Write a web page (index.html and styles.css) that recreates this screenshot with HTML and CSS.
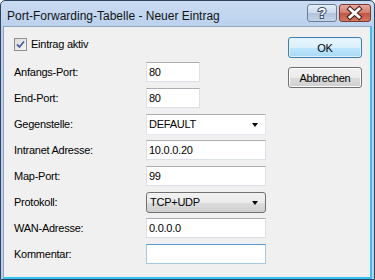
FILE: index.html
```html
<!DOCTYPE html>
<html lang="de">
<head>
    <meta charset="UTF-8">
    <title>Port-Forwarding-Tabelle - Neuer Eintrag</title>
    <link rel="stylesheet" href="styles.css">
</head>
<body>
<div class="fenster">
    <div class="titelleiste">
        <div class="titel">Port-Forwarding-Tabelle - Neuer Eintrag</div>
        <div class="titel_knoepfe">
            <div class="knopf_hilfe">
                <svg width="30" height="18" viewBox="0 0 30 18">
                    <text x="15" y="14" text-anchor="middle" class="fragezeichen">?</text>
                </svg>
            </div>
            <div class="knopf_schliessen">
                <svg width="31" height="18" viewBox="0 0 31 18">
                    <path d="M11 5 L20 13 M20 5 L11 13" stroke="#3b1f1a" stroke-width="5" stroke-linecap="square"/>
                    <path d="M11 5 L20 13 M20 5 L11 13" stroke="#ffffff" stroke-width="3" stroke-linecap="square"/>
                </svg>
            </div>
        </div>
    </div>

    <div class="inhalt">
        <div class="formular">
            <div class="zeile_check">
                <span class="checkbox">
                    <svg width="9" height="9" viewBox="0 0 9 9">
                        <path d="M1 4.5 L3.5 7 L8 1.5" fill="none" stroke="#4b5ea6" stroke-width="1.8"/>
                    </svg>
                </span>
                <span>Eintrag aktiv</span>
            </div>
            <div class="zeile">
                <label>Anfangs-Port:</label>
                <div class="feld klein">80</div>
            </div>
            <div class="zeile">
                <label>End-Port:</label>
                <div class="feld klein">80</div>
            </div>
            <div class="zeile">
                <label>Gegenstelle:</label>
                <div class="feld auswahl">DEFAULT<span class="pfeil"></span></div>
            </div>
            <div class="zeile">
                <label>Intranet Adresse:</label>
                <div class="feld">10.0.0.20</div>
            </div>
            <div class="zeile">
                <label>Map-Port:</label>
                <div class="feld">99</div>
            </div>
            <div class="zeile">
                <label>Protokoll:</label>
                <div class="feld liste">TCP+UDP<span class="pfeil"></span></div>
            </div>
            <div class="zeile">
                <label>WAN-Adresse:</label>
                <div class="feld">0.0.0.0</div>
            </div>
            <div class="zeile">
                <label>Kommentar:</label>
                <div class="feld aktiv"></div>
            </div>
        </div>

        <div class="knoepfe">
            <button class="button_ok">OK</button>
            <button class="button_abbrechen">Abbrechen</button>
        </div>
    </div>
</div>
</body>
</html>
```

FILE: styles.css
```css
/*seite*/
body{
    margin: 0;
    background-color: #ffffff;
    font-family: "Liberation Sans", Arial, sans-serif;
}

.fenster{
    width: 375px;
    height: 280px;
    box-sizing: border-box;
    border: 1px solid #2d4460;
    border-radius: 5px 5px 0 0;
    background: linear-gradient(#c9dbf1, #b9d0ec 30px, #b9d0ec);
    display: flex;
    flex-direction: column;
    overflow: hidden;
}

/*titelleiste*/
.titelleiste{
    height: 25px;
    display: flex;
    justify-content: space-between;
    align-items: flex-start;
}

.titel{
    font-size: 12px;
    color: #141414;
    padding-left: 6px;
    padding-top: 8px;
}

.titel_knoepfe{
    display: flex;
    gap: 2px;
    margin-top: 3px;
    margin-right: 3px;
}

.knopf_hilfe, .knopf_schliessen{
    height: 18px;
    box-sizing: border-box;
    border: 1px solid #6d7f96;
    border-radius: 3px;
}

.knopf_hilfe{
    width: 30px;
    background: linear-gradient(#e5eef8, #cbd9ea 50%, #b1c4dc 51%, #c3d4e8);
}

.knopf_schliessen{
    width: 32px;
    border-color: #7a3a32;
    background: linear-gradient(#e8a99f, #d47b6c 50%, #c35440 51%, #d2775f);
}

.knopf_hilfe svg, .knopf_schliessen svg{
    display: block;
    margin: -1px;
}

.fragezeichen{
    font-family: "Liberation Sans", Arial, sans-serif;
    font-size: 14px;
    font-weight: bold;
    fill: #ffffff;
    stroke: #3b4b60;
    stroke-width: 2px;
    paint-order: stroke;
}

/*inhalt*/
.inhalt{
    flex: 1;
    margin: 0 2px 0 2px;
    background-color: #f0f0f0;
    border: 1px solid #8ea4bf;
    border-bottom: 2px solid #38c2f2;
    border-right: 2px solid #38c2f2;
    display: flex;
    justify-content: space-between;
    font-size: 11px;
    letter-spacing: -0.25px;
    color: #000000;
}

.formular{
    padding-top: 7px;
    padding-left: 10px;
    display: flex;
    flex-direction: column;
    gap: 6px;
}

.zeile_check{
    height: 20px;
    display: flex;
    align-items: center;
    gap: 4px;
    margin-bottom: 2px;
}

.checkbox{
    width: 11px;
    height: 11px;
    border: 1px solid #8e8f8f;
    background: linear-gradient(135deg, #dcdcdc, #f6f6f6);
    display: flex;
    justify-content: center;
    align-items: center;
}

.zeile{
    height: 20px;
    display: flex;
    align-items: flex-start;
}

.zeile label{
    width: 132px;
    line-height: 20px;
}

.feld{
    width: 120px;
    height: 20px;
    box-sizing: border-box;
    background-color: #ffffff;
    border: 1px solid #dbdfe6;
    border-top-color: #abadb3;
    padding-left: 2px;
    line-height: 18px;
    position: relative;
}

.feld.klein{
    width: 54px;
}

.feld.auswahl{
    height: 21px;
    border: 1px solid #abadb3;
    border-color: #abadb3 #e3e9ef #e3e9ef #e2e3ea;
    line-height: 19px;
}

.feld.liste{
    height: 21px;
    border: 1px solid #707070;
    border-radius: 3px;
    background: linear-gradient(#f2f2f2, #ebebeb 50%, #dddddd 51%, #cfcfcf);
    padding-left: 3px;
    line-height: 19px;
}

.feld.aktiv{
    border: 1px solid #a4c9e3;
    border-top-color: #5a9ad0;
}

.pfeil{
    position: absolute;
    right: 7px;
    top: 8px;
    border-left: 3.5px solid transparent;
    border-right: 3.5px solid transparent;
    border-top: 4px solid #000000;
}

/*knoepfe*/
.knoepfe{
    padding-top: 10px;
    padding-right: 8px;
    display: flex;
    flex-direction: column;
    gap: 9px;
}

.button_ok, .button_abbrechen{
    width: 74px;
    height: 21px;
    font-family: "Liberation Sans", Arial, sans-serif;
    font-size: 11px;
    letter-spacing: -0.25px;
    color: #000000;
    border-radius: 3px;
    padding: 0;
}

.button_ok{
    border: 1px solid #3c7fb1;
    background: linear-gradient(#eaf6fd, #d9f0fc 50%, #bee6fd 51%, #a7d9f5);
    box-shadow: inset 0 0 0 1px #dff1fd;
}

.button_abbrechen{
    border: 1px solid #707070;
    background: linear-gradient(#f2f2f2, #ebebeb 50%, #dddddd 51%, #cfcfcf);
    box-shadow: inset 0 0 0 1px #fbfbfb;
}
```
